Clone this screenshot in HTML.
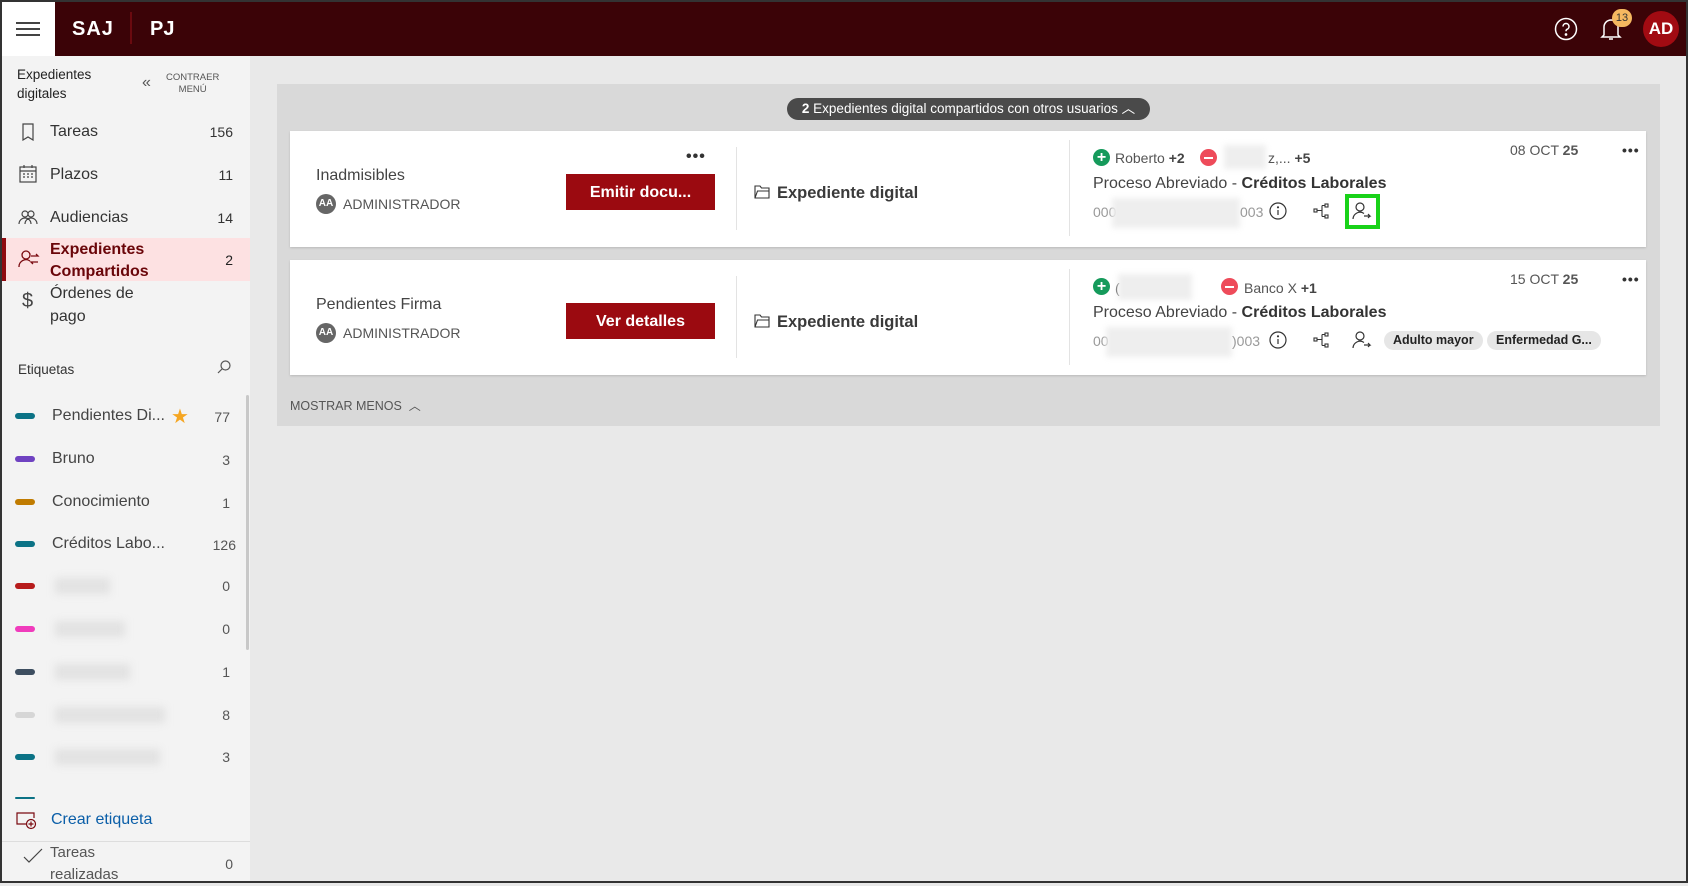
<!DOCTYPE html>
<html><head><meta charset="utf-8"><style>
*{box-sizing:border-box;margin:0;padding:0}
body{width:1688px;height:883px;overflow:hidden;background:#e9e9e9;font-family:"Liberation Sans",sans-serif;color:#333;position:relative}
.a{position:absolute;white-space:nowrap}
.hdr{left:0;top:0;width:1688px;height:56px;background:#3b0307;border-top:2px solid #333}
.sb{left:0;top:56px;width:250px;height:827px;background:#f3f3f3}
.nav{font-size:16px;color:#333}
.cnt{font-size:14px;color:#333;text-align:right;width:40px}
.lbl{width:20px;height:6px;border-radius:3px;left:15px}
.card{background:#fff;box-shadow:0 1px 2px rgba(0,0,0,.15)}
.btn{background:#9b0a10;color:#fff;font-weight:bold;font-size:16px;text-align:center;line-height:36px;width:149px;height:36px}
.blur{background:#eee;filter:blur(3px)}
.sbl{background:#e2e2e2;filter:blur(4px)}
.tag{background:#e6e6e6;border-radius:10px;font-size:12.5px;font-weight:bold;color:#222;height:19px;line-height:19px;padding:0 9px}
</style></head><body>
<div class="a" style="left:0;top:0;width:2px;height:883px;background:#333;z-index:5"></div>
<div class="a" style="right:0;top:0;width:2px;height:883px;background:#333;z-index:5"></div>
<div class="a" style="left:0;bottom:0;width:1688px;height:2px;background:#333;z-index:5"></div>
<div class="a hdr"></div>
<div class="a" style="left:0;top:2px;width:55px;height:54px;background:#fff"></div>
<div class="a" style="left:16px;top:22px;width:24px;height:2px;background:#444;box-shadow:0 6px 0 #444,0 12px 0 #444"></div>
<div class="a" style="left:72px;top:18px;color:#fff;font-weight:bold;font-size:20px;letter-spacing:1px">SAJ</div>
<div class="a" style="left:130px;top:12px;width:2px;height:32px;background:#6a0a0f"></div>
<div class="a" style="left:150px;top:18px;color:#fff;font-weight:bold;font-size:20px">PJ</div>
<svg class="a" style="left:1554px;top:17px" width="24" height="24" viewBox="0 0 24 24" fill="none" stroke="#fff" stroke-width="1.5"><circle cx="12" cy="12" r="10.5"/><path d="M9 9.5a3 3 0 1 1 4 2.8c-.8.4-1 1-1 2"/><circle cx="12" cy="17.5" r=".6" fill="#fff"/></svg>
<svg class="a" style="left:1599px;top:16px" width="24" height="26" viewBox="0 0 24 26" fill="none" stroke="#fff" stroke-width="1.5"><path d="M5 19V11a7 7 0 0 1 14 0v8l2 2H3z"/><path d="M10 23h4"/></svg>
<div class="a" style="left:1612px;top:9px;width:20px;height:18px;border-radius:9px;background:#f5b860;color:#333;font-size:11px;text-align:center;line-height:18px">13</div>
<div class="a" style="left:1643px;top:11px;width:36px;height:36px;border-radius:50%;background:#a10b12;color:#fff;font-weight:bold;font-size:17px;text-align:center;line-height:36px">AD</div>

<div class="a sb"></div>
<div class="a" style="left:17px;top:65px;font-size:13.5px;line-height:19px;color:#222">Expedientes<br>digitales</div>
<div class="a" style="left:142px;top:74px;font-size:16px;color:#555">«</div>
<div class="a" style="left:166px;top:72px;font-size:9.5px;color:#555;text-align:center;line-height:12px">CONTRAER<br>MENÚ</div>
<svg class="a" style="left:20px;top:123px" width="16" height="18" viewBox="0 0 16 18" fill="none" stroke="#444" stroke-width="1.2"><path d="M3 1h10v16l-5-3-5 3z"/></svg>
<div class="a nav" style="left:50px;top:123px">Tareas</div><div class="a cnt" style="left:193px;top:124px">156</div>
<svg class="a" style="left:19px;top:165px" width="18" height="18" viewBox="0 0 18 18" fill="none" stroke="#444" stroke-width="1.2"><rect x="1" y="2" width="16" height="15"/><path d="M1 6h16M5 0v3M13 0v3M4 9h2M8 9h2M12 9h2M4 12h2M8 12h2M12 12h2"/></svg>
<div class="a nav" style="left:50px;top:166px">Plazos</div><div class="a cnt" style="left:193px;top:167px">11</div>
<svg class="a" style="left:18px;top:209px" width="20" height="16" viewBox="0 0 20 16" fill="none" stroke="#444" stroke-width="1.2"><circle cx="7" cy="5" r="3"/><circle cx="13" cy="5" r="3"/><path d="M1 15a6 6 0 0 1 12 0M7 15a6 6 0 0 1 12 0"/></svg>
<div class="a nav" style="left:50px;top:209px">Audiencias</div><div class="a cnt" style="left:193px;top:210px">14</div>
<div class="a" style="left:2px;top:238px;width:248px;height:43px;background:#fde1e2;border-left:4px solid #8f0a10"></div>
<svg class="a" style="left:18px;top:250px" width="22" height="18" viewBox="0 0 22 18" fill="none" stroke="#7a0a10" stroke-width="1.3"><circle cx="8" cy="5" r="4"/><path d="M1 17a7 7 0 0 1 11-6M13 6h7l-2-2M20 12h-7l2 2"/></svg>
<div class="a nav" style="left:50px;top:239px;line-height:22px;color:#6a0509;font-weight:bold">Expedientes<br>Compartidos</div><div class="a cnt" style="left:193px;top:252px;color:#222">2</div>
<div class="a" style="left:22px;top:290px;font-size:20px;color:#444">$</div>
<div class="a nav" style="left:50px;top:282px;line-height:23px">Órdenes de<br>pago</div>
<div class="a" style="left:18px;top:362px;font-size:13.5px;color:#333">Etiquetas</div>
<svg class="a" style="left:217px;top:360px" width="14" height="14" viewBox="0 0 14 14" fill="none" stroke="#555" stroke-width="1.2"><circle cx="8.5" cy="5.5" r="4.5"/><path d="M5 9l-4 4"/></svg>
<div class="a" style="left:246px;top:395px;width:3px;height:255px;background:#c8c8c8;border-radius:2px"></div>

<div class="a lbl" style="top:413px;background:#0b7285"></div><div class="a nav" style="left:52px;top:407px;color:#444">Pendientes Di...</div><div class="a" style="left:171px;top:404px;font-size:20px;color:#f5a623">★</div><div class="a cnt" style="left:190px;top:409px;color:#555">77</div>
<div class="a lbl" style="top:456px;background:#6f42c1"></div><div class="a nav" style="left:52px;top:450px;color:#444">Bruno</div><div class="a cnt" style="left:190px;top:452px;color:#555">3</div>
<div class="a lbl" style="top:499px;background:#c07b00"></div><div class="a nav" style="left:52px;top:493px;color:#444">Conocimiento</div><div class="a cnt" style="left:190px;top:495px;color:#555">1</div>
<div class="a lbl" style="top:541px;background:#0b7285"></div><div class="a nav" style="left:52px;top:535px;color:#444">Créditos Labo...</div><div class="a cnt" style="left:196px;top:537px;color:#555">126</div>
<div class="a lbl" style="top:583px;background:#b71c1c"></div><div class="a sbl" style="left:55px;top:578px;width:55px;height:16px"></div><div class="a cnt" style="left:190px;top:578px;color:#555">0</div>
<div class="a lbl" style="top:626px;background:#f03cbc"></div><div class="a sbl" style="left:55px;top:621px;width:70px;height:16px"></div><div class="a cnt" style="left:190px;top:621px;color:#555">0</div>
<div class="a lbl" style="top:669px;background:#3d4e60"></div><div class="a sbl" style="left:55px;top:664px;width:75px;height:16px"></div><div class="a cnt" style="left:190px;top:664px;color:#555">1</div>
<div class="a lbl" style="top:712px;background:#d6d6d6"></div><div class="a sbl" style="left:55px;top:707px;width:110px;height:16px"></div><div class="a cnt" style="left:190px;top:707px;color:#555">8</div>
<div class="a lbl" style="top:754px;background:#0b7285"></div><div class="a sbl" style="left:55px;top:749px;width:105px;height:16px"></div><div class="a cnt" style="left:190px;top:749px;color:#555">3</div>
<div class="a lbl" style="top:797px;height:2px;background:#0b7285"></div>
<svg class="a" style="left:16px;top:812px" width="22" height="18" viewBox="0 0 22 18" fill="none" stroke="#7a0a10" stroke-width="1.2"><path d="M11 12H1V1h17v5"/><circle cx="15" cy="12" r="4.5"/><path d="M15 9.5v5M12.5 12h5"/></svg>
<div class="a" style="left:51px;top:811px;font-size:16px;color:#0a5ea8">Crear etiqueta</div>
<div class="a" style="left:2px;top:841px;width:248px;height:1px;background:#ddd"></div>
<svg class="a" style="left:23px;top:848px" width="20" height="16" viewBox="0 0 20 16" fill="none" stroke="#444" stroke-width="1.2"><path d="M1 9l5 5L19 1"/></svg>
<div class="a" style="left:50px;top:842px;font-size:15px;line-height:22px;color:#555">Tareas<br>realizadas</div>
<div class="a cnt" style="left:193px;top:856px;color:#555">0</div>

<div class="a" style="left:277px;top:84px;width:1383px;height:342px;background:#d9d9d9"></div>
<div class="a" style="left:787px;top:98px;width:363px;height:22px;border-radius:11px;background:#4a4a4a;color:#fff;font-size:13.5px;line-height:22px;text-align:center"><b>2</b> Expedientes digital compartidos con otros usuarios ︿</div>

<div class="a card" style="left:290px;top:131px;width:1356px;height:116px"></div>
<div class="a card" style="left:290px;top:260px;width:1356px;height:115px"></div>

<div class="a" style="left:316px;top:167px;font-size:16px;color:#444">Inadmisibles</div>
<div class="a" style="left:316px;top:194px;width:20px;height:20px;border-radius:50%;background:#666;color:#fff;font-size:10px;font-weight:bold;text-align:center;line-height:20px">AA</div>
<div class="a" style="left:343px;top:196px;font-size:14px;color:#555">ADMINISTRADOR</div>
<div class="a" style="left:686px;top:148px;font-size:16px;font-weight:bold;color:#333;letter-spacing:1px">•••</div>
<div class="a btn" style="left:566px;top:174px;line-height:38px">Emitir docu...</div>
<div class="a" style="left:736px;top:147px;width:1px;height:83px;background:#e3e3e3"></div>
<svg class="a" style="left:754px;top:185px" width="16" height="14" viewBox="0 0 16 14" fill="none" stroke="#333" stroke-width="1.1"><path d="M1 1h5l1.5 2H15v10H1z"/><path d="M1 13l2.5-7H15"/></svg>
<div class="a" style="left:777px;top:184px;font-size:16.5px;font-weight:bold;color:#3a3a3a">Expediente digital</div>
<div class="a" style="left:1069px;top:140px;width:1px;height:96px;background:#e3e3e3"></div>

<div class="a" style="left:1093px;top:149px;width:17px;height:17px;border-radius:50%;background:#159a5b;color:#fff;font-weight:bold;font-size:16px;line-height:17px;text-align:center">+</div>
<div class="a" style="left:1115px;top:150px;font-size:14px;color:#555">Roberto <b style="color:#444">+2</b></div>
<div class="a" style="left:1200px;top:149px;width:17px;height:17px;border-radius:50%;background:#ee4b5a"><div style="margin:7.5px 4px;height:2px;background:#fff"></div></div>
<div class="a blur" style="left:1224px;top:145px;width:42px;height:24px"></div>
<div class="a" style="left:1268px;top:150px;font-size:14px;color:#555">z,... <b style="color:#444">+5</b></div>
<div class="a" style="left:1093px;top:175px;font-size:16px;color:#444">Proceso Abreviado - <b style="color:#333">Créditos Laborales</b></div>
<div class="a" style="left:1093px;top:204px;font-size:14px;color:#999">000</div>
<div class="a blur" style="left:1112px;top:198px;width:128px;height:30px"></div>
<div class="a" style="left:1240px;top:204px;font-size:14px;color:#999">003</div>
<div class="a" style="left:1510px;top:142px;font-size:14px;color:#555">08 OCT <b>25</b></div>
<div class="a" style="left:1622px;top:142px;font-size:14px;font-weight:bold;color:#333;letter-spacing:1px">•••</div>

<div class="a" style="left:1093px;top:333px;font-size:14px;color:#999">00</div>
<div class="a blur" style="left:1106px;top:327px;width:126px;height:30px"></div>
<div class="a" style="left:1232px;top:333px;font-size:14px;color:#999">)003</div>

<div class="a" style="left:1093px;top:278px;width:17px;height:17px;border-radius:50%;background:#159a5b;color:#fff;font-weight:bold;font-size:16px;line-height:17px;text-align:center">+</div>
<div class="a" style="left:1115px;top:280px;font-size:14px;color:#555">(</div>
<div class="a blur" style="left:1118px;top:274px;width:74px;height:26px"></div>
<div class="a" style="left:1221px;top:278px;width:17px;height:17px;border-radius:50%;background:#ee4b5a"><div style="margin:7.5px 4px;height:2px;background:#fff"></div></div>
<div class="a" style="left:1244px;top:280px;font-size:14px;color:#555">Banco X <b style="color:#444">+1</b></div>
<div class="a" style="left:1093px;top:304px;font-size:16px;color:#444">Proceso Abreviado - <b style="color:#333">Créditos Laborales</b></div>
<div class="a" style="left:1510px;top:271px;font-size:14px;color:#555">15 OCT <b>25</b></div>
<div class="a" style="left:1622px;top:271px;font-size:14px;font-weight:bold;color:#333;letter-spacing:1px">•••</div>
<div class="a tag" style="left:1384px;top:331px">Adulto mayor</div>
<div class="a tag" style="left:1487px;top:331px">Enfermedad G...</div>

<div class="a" style="left:316px;top:296px;font-size:16px;color:#444">Pendientes Firma</div>
<div class="a" style="left:316px;top:323px;width:20px;height:20px;border-radius:50%;background:#666;color:#fff;font-size:10px;font-weight:bold;text-align:center;line-height:20px">AA</div>
<div class="a" style="left:343px;top:325px;font-size:14px;color:#555">ADMINISTRADOR</div>
<div class="a btn" style="left:566px;top:303px;line-height:38px">Ver detalles</div>
<div class="a" style="left:736px;top:276px;width:1px;height:82px;background:#e3e3e3"></div>
<svg class="a" style="left:754px;top:314px" width="16" height="14" viewBox="0 0 16 14" fill="none" stroke="#333" stroke-width="1.1"><path d="M1 1h5l1.5 2H15v10H1z"/><path d="M1 13l2.5-7H15"/></svg>
<div class="a" style="left:777px;top:313px;font-size:16.5px;font-weight:bold;color:#3a3a3a">Expediente digital</div>
<div class="a" style="left:1069px;top:269px;width:1px;height:96px;background:#e3e3e3"></div>

<svg class="a" style="left:1269px;top:202px" width="18" height="18" viewBox="0 0 18 18" fill="none" stroke="#333" stroke-width="1.2"><circle cx="9" cy="9" r="8"/><path d="M9 8v5"/><circle cx="9" cy="5.3" r=".5" fill="#333"/></svg>
<svg class="a" style="left:1313px;top:203px" width="18" height="16" viewBox="0 0 18 16" fill="none" stroke="#333" stroke-width="1.1"><rect x="1" y="6" width="3" height="3"/><rect x="12" y="1" width="3" height="3"/><rect x="12" y="12" width="3" height="3"/><path d="M4 7.5h5M9 2.5v11M9 2.5h3M9 13.5h3"/></svg>
<div class="a" style="left:1345px;top:194px;width:35px;height:35px;border:4px solid #19d219"></div>
<svg class="a" style="left:1352px;top:202px" width="20" height="18" viewBox="0 0 20 18" fill="none" stroke="#333" stroke-width="1.2"><circle cx="8" cy="5" r="4"/><path d="M1 17a7 7 0 0 1 11-5.5M12 14h6l-2-2M18 14l-2 2"/></svg>
<svg class="a" style="left:1269px;top:331px" width="18" height="18" viewBox="0 0 18 18" fill="none" stroke="#333" stroke-width="1.2"><circle cx="9" cy="9" r="8"/><path d="M9 8v5"/><circle cx="9" cy="5.3" r=".5" fill="#333"/></svg>
<svg class="a" style="left:1313px;top:332px" width="18" height="16" viewBox="0 0 18 16" fill="none" stroke="#333" stroke-width="1.1"><rect x="1" y="6" width="3" height="3"/><rect x="12" y="1" width="3" height="3"/><rect x="12" y="12" width="3" height="3"/><path d="M4 7.5h5M9 2.5v11M9 2.5h3M9 13.5h3"/></svg>
<svg class="a" style="left:1352px;top:331px" width="20" height="18" viewBox="0 0 20 18" fill="none" stroke="#333" stroke-width="1.2"><circle cx="8" cy="5" r="4"/><path d="M1 17a7 7 0 0 1 11-5.5M12 14h6l-2-2M18 14l-2 2"/></svg>

<div class="a" style="left:290px;top:397px;font-size:12.5px;color:#555">MOSTRAR MENOS &nbsp;<span style="font-size:12px">︿</span></div>
</body></html>
